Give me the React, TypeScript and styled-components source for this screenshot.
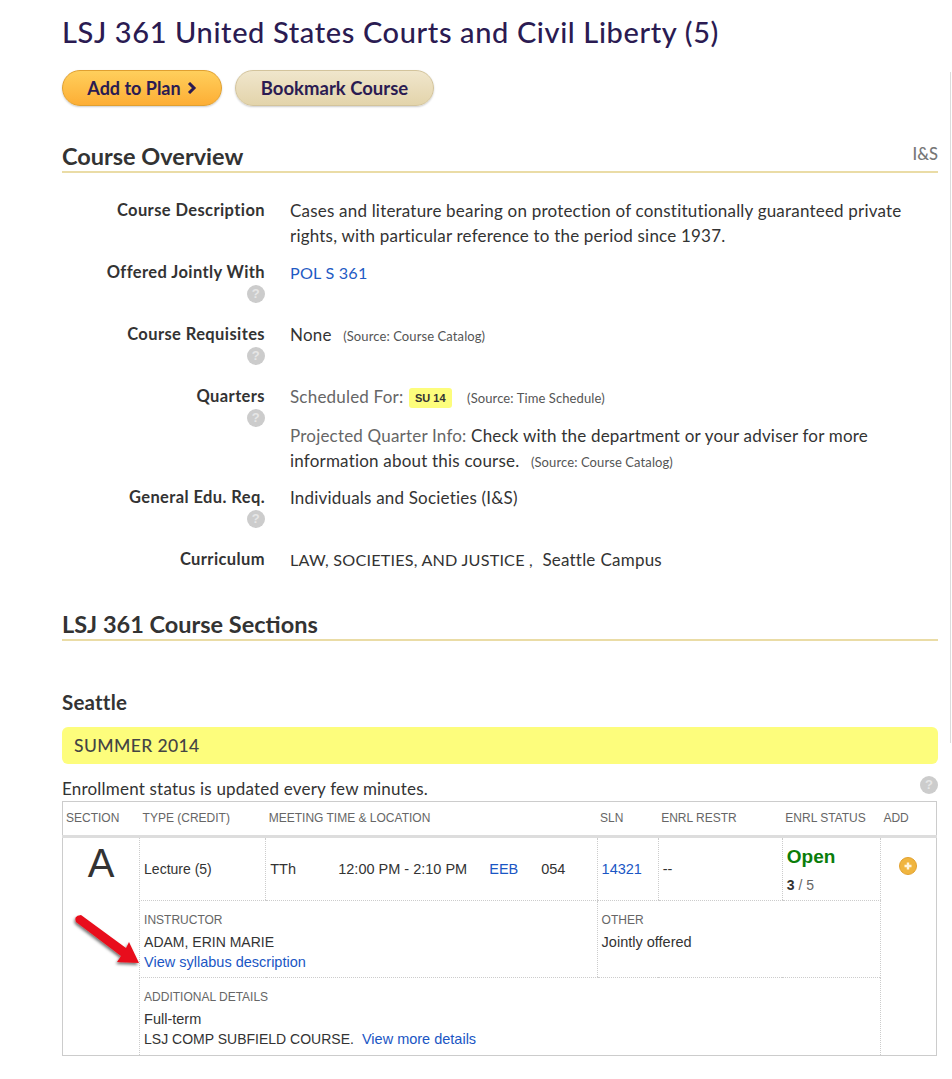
import React from 'react'
import styled, { createGlobalStyle } from 'styled-components'

const GlobalStyle = createGlobalStyle`
	html, body {
		margin: 0;
		padding: 0;
		background: white;
	}
	body {
		font-family: Lato, "Open Sans", sans-serif;
		color: #333;
	}
`

const Page = styled.div`
	position: relative;
	width: 876px;
	height: 1079px;
	padding: 0 14px 0 62px;
	overflow: hidden;
`

const SidebarEdge = styled.div`
	position: absolute;
	left: 950px;
	top: 72px;
	width: 1px;
	height: 671px;
	background: #dcdcdc;
`

const Title = styled.h1`
	margin: 0;
	padding-top: 14px;
	font-size: 29px;
	line-height: 36px;
	font-weight: 500;
	color: #2b1b52;
	letter-spacing: 0.62px;
`

const Buttons = styled.div`
	display: flex;
	gap: 13px;
	margin-top: 20px;
`

const PlanButton = styled.button<{ $variant: 'gold' | 'tan' }>`
	display: flex;
	align-items: center;
	justify-content: center;
	gap: 6px;
	height: 36px;
	width: ${p => (p.$variant === 'gold' ? '160px' : '199px')};
	padding: 0;
	border-radius: 18px;
	border: 1px solid ${p => (p.$variant === 'gold' ? '#e0a030' : '#d3c49c')};
	background: ${p =>
		p.$variant === 'gold'
			? 'linear-gradient(#ffcf5c, #fdae35)'
			: 'linear-gradient(#f0e6cc, #e3d4ab)'};
	box-shadow: 0 1px 2px rgb(0 0 0 / 20%);
	font-family: inherit;
	font-size: ${p => (p.$variant === 'gold' ? '18px' : '18.5px')};
	font-weight: 700;
	color: #2b1b52;
`

const SectionHeader = styled.div<{ $top: number }>`
	display: flex;
	justify-content: space-between;
	align-items: flex-end;
	margin-top: ${p => p.$top}px;
	height: 30px;
	border-bottom: 2px solid #eadca6;
`

const SectionTitle = styled.h2`
	margin: 0;
	font-size: 23.5px;
	line-height: 30px;
	font-weight: 700;
	color: #333;
`

const SectionTag = styled.span`
	font-size: 16.5px;
	font-weight: 500;
	color: #777;
	padding-bottom: 7px;
`

const Overview = styled.dl`
	display: grid;
	grid-template-columns: 203px 1fr;
	column-gap: 25px;
	margin: 0;
	padding-top: 25px;
	font-size: 17px;
	line-height: 25px;
	letter-spacing: 0.2px;
`

const Label = styled.dt`
	display: flex;
	flex-direction: column;
	align-items: flex-end;
	font-weight: 700;
	font-size: 16.5px;
	letter-spacing: 0.4px;
	color: #333;
	min-height: 62px;
`

const Value = styled.dd`
	margin: 0;
	color: #333;
`

const QuartersValue = styled(Value)`
	padding-bottom: 10px;
`

const Caps = styled.span`
	font-size: 16.2px;
`

const Source = styled.span`
	font-size: 13px;
	letter-spacing: 0.1px;
	color: #555;
	margin-left: 7px;
`

const Muted = styled.span`
	color: #666;
`

const Badge = styled.span`
	display: inline-block;
	padding: 0 6px;
	margin: 0 4px 0 1px;
	line-height: 20px;
	border-radius: 3px;
	background: #fdfd7c;
	font-family: "Liberation Sans", sans-serif;
	font-size: 11px;
	letter-spacing: 0;
	font-weight: 700;
	color: #333;
	vertical-align: 1px;
`

const SchedLine = styled.div`
	margin-bottom: 12px;
`

const CatalogLink = styled.a`
	color: #1f5bc4;
`

const CampusName = styled.span`
	margin-left: 5px;
`

const HelpDot = styled.span`
	display: inline-flex;
	align-items: center;
	justify-content: center;
	width: 18px;
	height: 18px;
	border-radius: 50%;
	background: #ccc;
	color: #e6e6e6;
	font-family: "Liberation Sans", sans-serif;
	font-size: 13px;
	font-weight: 700;
	line-height: 18px;
`

const Campus = styled.h3`
	margin: 48px 0 0;
	font-size: 20.5px;
	line-height: 26px;
	font-weight: 700;
	letter-spacing: 0.2px;
	color: #333;
`

const QuarterBar = styled.div`
	margin-top: 12px;
	height: 37px;
	border-radius: 6px;
	background: #fdfd7c;
	padding-left: 12px;
	font-size: 17.5px;
	line-height: 37px;
	font-weight: 500;
	letter-spacing: 0.4px;
	color: #444;
`

const StatusNote = styled.div`
	display: flex;
	justify-content: space-between;
	align-items: flex-end;
	height: 36px;
	padding-bottom: 1px;
	font-size: 17px;
	line-height: 22px;
	letter-spacing: 0.2px;
	color: #333;
`

const NoteHelp = styled(HelpDot)`
	margin-bottom: 6px;
`

const Sections = styled.table`
	width: 875px;
	table-layout: fixed;
	border-collapse: collapse;
	border: 1px solid #ccc;
	font-family: "Liberation Sans", Arial, sans-serif;
	font-size: 14.5px;
	color: #333;
`

const Head = styled.th`
	height: 31px;
	padding: 0 0 2px 3px;
	border-bottom: 3px solid #ddd;
	text-align: left;
	font-size: 12px;
	font-weight: 400;
	color: #666;
`

const Cell = styled.td<{ $height?: number }>`
	box-sizing: border-box;
	height: ${p => (p.$height ? `${p.$height}px` : 'auto')};
	padding: 0 4px;
	border-left: 1px dotted #ccc;
	border-bottom: 1px dotted #ccc;
	vertical-align: middle;
`

const LetterCell = styled.td`
	padding-top: 2px;
	vertical-align: top;
	text-align: center;
	font-size: 40px;
	line-height: 46px;
	color: #333;
`

const AddCell = styled.td`
	padding-top: 19px;
	border-left: 1px dotted #ccc;
	vertical-align: top;
	text-align: center;
`

const Meeting = styled.div`
	display: flex;
	align-items: center;
`

const MeetingPart = styled.span<{ $width: number }>`
	width: ${p => p.$width}px;
`

const TableLink = styled.a`
	color: #1a56c4;
`

const Narrow = styled.span`
	font-size: 14px;
`

const StatusCell = styled(Cell)`
	vertical-align: top;
	padding-top: 8px;
`

const OpenLabel = styled.div`
	font-size: 19px;
	line-height: 22px;
	font-weight: 700;
	color: #0a7d0a;
`

const Seats = styled.div`
	margin-top: 9px;
	font-size: 14px;
	line-height: 16px;
	color: #666;

	b {
		color: #333;
	}
`

const DetailCell = styled(Cell)`
	vertical-align: top;
	padding-top: 12px;
	line-height: 20px;
`

const DetailLabel = styled.div`
	font-size: 12px;
	line-height: 14px;
	color: #666;
	margin-bottom: 5px;
`

const ArrowOverlay = styled.svg`
	position: absolute;
	left: 70px;
	top: 908px;
	overflow: visible;
`

const AddIcon = () => (
	<svg width="18" height="18" viewBox="0 0 18 18">
		<circle cx="9" cy="9" r="8.5" fill="#f0b53f" stroke="#e2a12f" />
		<path d="M9 5.5v7M5.5 9h7" stroke="#fff5dc" strokeWidth="2.4" />
	</svg>
)

const Chevron = () => (
	<svg width="10" height="12" viewBox="0 0 10 12">
		<path d="M2 1l5 5-5 5" fill="none" stroke="#2b1b52" strokeWidth="3" />
	</svg>
)

const RedArrow = () => (
	<ArrowOverlay width="72" height="60" viewBox="0 0 72 60">
		<defs>
			<filter id="arrow-shadow" x="-20%" y="-20%" width="140%" height="140%">
				<feDropShadow dx="-1" dy="2" stdDeviation="1.5" floodColor="#000" floodOpacity="0.55" />
			</filter>
		</defs>
		<path
			d="M11 7 L56 40 L59 34 L69 55 L47 54 L51 48 L6 14 Q3 8 11 7 Z"
			fill="#e8101a"
			filter="url(#arrow-shadow)"
		/>
	</ArrowOverlay>
)

const App = () => {
	return (
		<Page>
			<GlobalStyle />
			<SidebarEdge />
			<Title>LSJ 361 United States Courts and Civil Liberty (5)</Title>
			<Buttons>
				<PlanButton $variant="gold">Add to Plan <Chevron /></PlanButton>
				<PlanButton $variant="tan">Bookmark Course</PlanButton>
			</Buttons>

			<SectionHeader $top={35}>
				<SectionTitle>Course Overview</SectionTitle>
				<SectionTag>I&amp;S</SectionTag>
			</SectionHeader>

			<Overview>
				<Label>Course Description</Label>
				<Value>Cases and literature bearing on protection of constitutionally guaranteed private rights, with particular reference to the period since 1937.</Value>
				<Label>Offered Jointly With<HelpDot>?</HelpDot></Label>
				<Value><CatalogLink><Caps>POL S 361</Caps></CatalogLink></Value>
				<Label>Course Requisites<HelpDot>?</HelpDot></Label>
				<Value>None <Source>(Source: Course Catalog)</Source></Value>
				<Label>Quarters<HelpDot>?</HelpDot></Label>
				<QuartersValue>
					<SchedLine><Muted>Scheduled For:</Muted> <Badge>SU 14</Badge> <Source>(Source: Time Schedule)</Source></SchedLine>
					<div><Muted>Projected Quarter Info:</Muted> Check with the department or your adviser for more information about this course. <Source>(Source: Course Catalog)</Source></div>
				</QuartersValue>
				<Label>General Edu. Req.<HelpDot>?</HelpDot></Label>
				<Value>Individuals and Societies (I&amp;S)</Value>
				<Label>Curriculum</Label>
				<Value><Caps>LAW, SOCIETIES, AND JUSTICE ,</Caps> <CampusName>Seattle</CampusName><CampusName>Campus</CampusName></Value>
			</Overview>

			<SectionHeader $top={0}>
				<SectionTitle>LSJ 361 Course Sections</SectionTitle>
			</SectionHeader>

			<Campus>Seattle</Campus>
			<QuarterBar>SUMMER 2014</QuarterBar>
			<StatusNote>
				Enrollment status is updated every few minutes.
				<NoteHelp>?</NoteHelp>
			</StatusNote>

			<Sections>
				<colgroup>
					<col width="77" />
					<col width="126" />
					<col width="331" />
					<col width="61" />
					<col width="124" />
					<col width="98" />
					<col width="56" />
				</colgroup>
				<thead>
					<tr>
						<Head>SECTION</Head>
						<Head>TYPE (CREDIT)</Head>
						<Head>MEETING TIME &amp; LOCATION</Head>
						<Head>SLN</Head>
						<Head>ENRL RESTR</Head>
						<Head>ENRL STATUS</Head>
						<Head>ADD</Head>
					</tr>
				</thead>
				<tbody>
					<tr>
						<LetterCell rowSpan={3}>A</LetterCell>
						<Cell $height={64}><Narrow>Lecture (5)</Narrow></Cell>
						<Cell>
							<Meeting>
								<MeetingPart $width={68}>TTh</MeetingPart>
								<MeetingPart $width={151}>12:00 PM - 2:10 PM</MeetingPart>
								<MeetingPart $width={52}><TableLink>EEB</TableLink></MeetingPart>
								<MeetingPart $width={40}>054</MeetingPart>
							</Meeting>
						</Cell>
						<Cell><TableLink>14321</TableLink></Cell>
						<Cell>--</Cell>
						<StatusCell>
							<OpenLabel>Open</OpenLabel>
							<Seats><b>3</b> / 5</Seats>
						</StatusCell>
						<AddCell rowSpan={3}><AddIcon /></AddCell>
					</tr>
					<tr>
						<DetailCell $height={77} colSpan={2}>
							<DetailLabel>INSTRUCTOR</DetailLabel>
							<Narrow>ADAM, ERIN MARIE</Narrow><br />
							<TableLink>View syllabus description</TableLink>
						</DetailCell>
						<DetailCell colSpan={3}>
							<DetailLabel>OTHER</DetailLabel>
							Jointly offered
						</DetailCell>
					</tr>
					<tr>
						<DetailCell $height={78} colSpan={5}>
							<DetailLabel>ADDITIONAL DETAILS</DetailLabel>
							Full-term<br />
							<Narrow>LSJ COMP SUBFIELD COURSE.</Narrow> &nbsp;<TableLink>View more details</TableLink>
						</DetailCell>
					</tr>
				</tbody>
			</Sections>
			<RedArrow />
		</Page>
	)
}

export default App
